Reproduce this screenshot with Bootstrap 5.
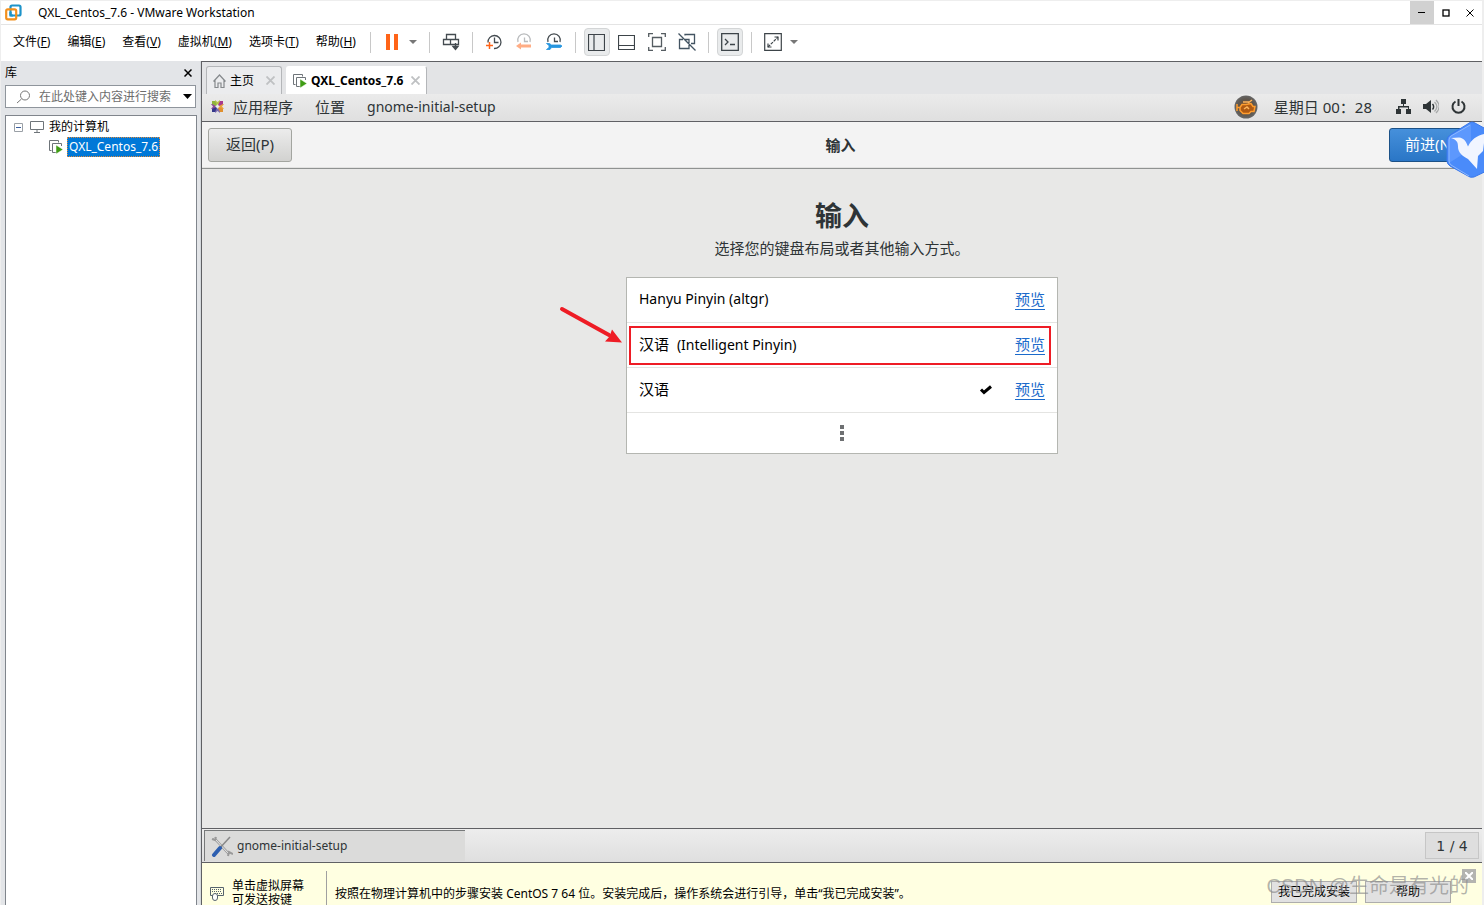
<!DOCTYPE html>
<html lang="zh-CN">
<head>
<meta charset="utf-8">
<meta name="viewport" content="width=device-width, initial-scale=1">
<title>QXL_Centos_7.6 - VMware Workstation</title>
<link href="https://cdn.jsdelivr.net/npm/bootstrap@5.3.0/dist/css/bootstrap.min.css" rel="stylesheet">
<style>
  body { font: 12px/16px "Noto Sans", "Noto Sans CJK SC", sans-serif; color: #000; background: #fff; }
  svg { display: block; flex: none; }
  button { border: 0; padding: 0; background: none; color: inherit; }
  .app { border: solid #eee; border-width: 1px 2px 0 1px; }
  .title-bar { height: 24px; border-bottom: 1px solid #e4e4e4; }
  .win-btn { width: 24px; height: 23px; display: grid; place-items: center; }
  .win-btn.hot { background: #d1d1d1; }
  .menu-bar { height: 36px; padding-left: 4px; }
  .menu-bar .nav { gap: 1px; }
  .menu-bar .nav-link { padding: 7px 8px 9px; line-height: 16px; color: #000; }
  .tools { gap: 4px; padding: 0 0 2px 2px; }
  .tool { width: 26px; height: 28px; display: grid; place-items: center; border: 1px solid transparent; border-radius: 4px; }
  .tool.on { background: #e9ebec; border-color: #d3d5d6; }
  .tool-caret { width: 16px; height: 28px; display: grid; place-items: center; }
  .sep { width: 1px; height: 21px; margin: 0 4px; background: #c8c8c8; }
  .library { width: 200px; background: #e3e5e8; padding: 0 4px; border-right: 1px solid #d4d8dc; }
  .library-head { height: 24px; }
  .search { height: 23px; border: 1px solid #8f959c; background: #fff; padding: 0 3px 0 10px; margin-bottom: 7px; }
  .search input { border: 0; outline: 0; padding: 0; font: inherit; width: 0; }
  .search input::placeholder { color: #6d6d6d; opacity: 1; }
  .tree { border: 1px solid #80858c; border-bottom: 0; background: #fff; padding: 1px 8px; width: 192px; }
  .tree li { height: 20px; }
  .tree-mark { margin-right: 7px; }
  .tree-vm { padding-left: 35px; }
  .tree .picked { background: #0078d7; color: #fff; outline: 1px dotted #e08a3c; outline-offset: -1px; padding: 2px; line-height: 16px; }
  .vm { border-left: 1px solid #5f6064; border-top: 1px solid #5f6064; }
  .tab-strip { background: #e3e4e6; height: 32px; padding: 4px 4px 0; gap: 4px; }
  .vm-tab { height: 28px; padding: 0 6px; border: 1px solid #b4b6b9; border-bottom: 0; border-radius: 3px 3px 0 0; background: #ebecee; }
  .vm-tab.current { background: #fff; border-left-color: #fff; border-top-color: #fff; }
  .guest { background: #e8e8e7; color: #2e3436; font-size: 15px; line-height: 20px; }
  .g-text { font-size: 14px; }
  .top-panel { height: 28px; background: linear-gradient(#ebebeb, #dfdfdf); border-bottom: 1px solid #5f6064; padding: 0 16px 2px 8px; }
  .panel-menu { gap: 22px; }
  .head-bar { height: 47px; background: #f3f3f3; border-bottom: 1px solid #8f9291; box-shadow: inset 0 -1px #e2e2e1; padding: 0 6px; }
  .g-btn { height: 34px; min-width: 84px; border: 1px solid #a3a5a0; border-radius: 3px; background: linear-gradient(#ececec, #d2d2d0); padding: 0 15px 2px; }
  .g-btn.go { min-width: 87px; background: linear-gradient(#4690db, #2a76c6); border-color: #1c5187; color: #fff; text-align: left; }
  .bird { position: absolute; right: -16px; top: 121px; z-index: 3; }
  .page-body { padding-top: 33px; }
  .page-title { font-size: 27px; line-height: 28px; font-weight: 700; margin-bottom: 8px; }
  .layouts { width: 432px; margin-top: 19px; background: #fff; border: 1px solid #b4b6b1; color: #000; }
  .layouts li { height: 45px; padding: 0 12px 2px; border-bottom: 1px solid #e4e4e2; }
  .layouts li:last-child { height: 40px; padding-bottom: 0; border: 0; }
  .layouts a { color: #1b6acb; border-bottom: 1px solid #1b6acb; line-height: 20px; text-decoration: none; }
  .pick-box { position: absolute; left: 2px; right: 6px; top: 3px; bottom: 2px; border: 2px solid #ee1c25; }
  .pick-arrow { position: absolute; right: 100%; top: -20px; margin-right: 4px; }
  .task-bar { height: 35px; border: solid #5f6064; border-width: 1px 0; background: linear-gradient(#ededed, #dfdfdf); padding: 1px 3px 1px 2px; }
  .task { width: 261px; height: 31px; padding: 0 6px; background: #dbdbda; border: solid #77797a; border-width: 1px 0 0 1px; font-size: 12px; }
  .pager { width: 54px; height: 27px; border: 1px solid #c6c6c6; background: #dedede; font-family: "DejaVu Sans", sans-serif; font-size: 14px; }
  .hint { height: 42px; background: #ffffe1; line-height: 14px; padding-left: 8px; }
  .hint-rule { width: 1px; height: 34px; background: #a0a0a0; margin: 8px 8px 0 22px; }
  .hint-actions { gap: 8px; padding: 18px 31px 0 0; }
  .h-btn { height: 22px; width: 86px; background: #e1e1e1; border: 1px solid #adadad; }
  .watermark { position: absolute; right: 13px; bottom: 7px; font: 20px/24px "Liberation Sans", "Noto Sans CJK SC", sans-serif; color: #8c8c8ca8; white-space: nowrap; pointer-events: none; }
  .hint-close { position: absolute; right: 6px; top: 6px; width: 14px; height: 14px; background: #b4b4b0; display: grid; place-items: center; }
</style>
</head>
<body class="position-relative overflow-hidden">
<div class="app vh-100 d-flex flex-column overflow-hidden">
  <header class="title-bar d-flex align-items-center flex-shrink-0">
    <svg class="ms-1" width="17" height="17" viewBox="0 0 17 17" fill="none" stroke-width="2.2"><rect x="5.500" y="1.500" width="10" height="10" rx="1.500" stroke="#1d93c9"/><rect x="1.200" y="5.300" width="10" height="10" rx="1.500" stroke="#f2901d"/><path d="M5.500 8V11.500H8" stroke="#1d93c9"/></svg>
    <span class="ms-3 me-auto">QXL_Centos_7.6 - VMware Workstation</span>
    <button class="win-btn hot" aria-label="最小化"><svg width="8" height="8" stroke="#000"><path d="M0 3.500H7"/></svg></button>
    <button class="win-btn" aria-label="最大化"><svg width="8" height="8" fill="none" stroke="#000" stroke-width="1.300"><rect x="1" y="1" width="6" height="6"/></svg></button>
    <button class="win-btn" aria-label="关闭"><svg width="8" height="8" stroke="#000"><path d="M.5.5l7 7m0-7l-7 7"/></svg></button>
  </header>

  <nav class="menu-bar d-flex align-items-center flex-shrink-0">
    <div class="nav flex-nowrap text-nowrap">
      <a class="nav-link" href="#">文件(<u>F</u>)</a><a class="nav-link" href="#">编辑(<u>E</u>)</a><a class="nav-link" href="#">查看(<u>V</u>)</a><a class="nav-link" href="#">虚拟机(<u>M</u>)</a><a class="nav-link" href="#">选项卡(<u>T</u>)</a><a class="nav-link" href="#">帮助(<u>H</u>)</a>
    </div>
    <div class="tools d-flex align-items-center">
      <span class="sep"></span>
      <div class="d-flex">
        <button class="tool" aria-label="挂起"><svg width="12" height="16" fill="#ff6418"><path d="M0 0h4v16H0zM8 0h4v16H8z"/></svg></button>
        <button class="tool-caret" aria-label="电源选项"><svg width="8" height="4" fill="#777"><path d="M0 0h8L4 4z"/></svg></button>
      </div>
      <span class="sep"></span>
      <button class="tool" aria-label="发送 Ctrl+Alt+Del"><svg width="18" height="18" fill="none" stroke="#444b50" stroke-width="1.300"><path d="M4.500 6.500V1.500h9v5M1.500 6.500h15v5h-15zM8.500 6.500v5M13.500 10v6M11 13.500l2.500 3 2.500-3z"/></svg></button>
      <span class="sep"></span>
      <button class="tool" aria-label="拍摄快照"><svg width="18" height="18" fill="none" stroke="#444b50" stroke-width="1.300"><path d="M3 9.500A6.500 6.500 0 1 1 9 15.500M9.500 4.500v5h4"/><path d="M1 12.500h7M4.500 9v7" stroke="#ff6418" stroke-width="1.500"/></svg></button>
      <button class="tool" aria-label="恢复快照"><svg width="18" height="18" fill="none" stroke="#b9bbbd" stroke-width="1.300"><path d="M3 9A6.300 6.300 0 1 1 15 9M9.500 4.500v4h3.500"/><path d="M1 13l5-3.500v7z" stroke="none" fill="#ffad85"/><path d="M4 13h12" stroke="#ffad85" stroke-width="3"/></svg></button>
      <button class="tool" aria-label="管理快照"><svg width="18" height="18" fill="none" stroke="#444b50" stroke-width="1.300"><path d="M3 9A6.300 6.300 0 1 1 15 9M9.500 4.500v4h3.500"/><path d="M1.500 10.500h3l2 1.500h9l1.500 1-1.500 1.500h-9L5 16.500H1.500L4 14.500v-2z" fill="#2696df" stroke="#2696df" stroke-width=".8"/></svg></button>
      <span class="sep"></span>
      <button class="tool on" aria-label="显示或隐藏库"><svg width="17" height="17" fill="none" stroke="#3d4449"><path d="M.5.500h16v16H.500zM6 .5v16" stroke-width="1.200"/></svg></button>
      <button class="tool" aria-label="缩略图栏"><svg width="17" height="17" fill="none" stroke="#3d4449" stroke-width="1.200"><path d="M.5 1.500h16v14H.500zM.5 11.500h16"/></svg></button>
      <button class="tool" aria-label="全屏"><svg width="18" height="18" fill="none" stroke="#555c61" stroke-width="1.300"><path d="M.700 4V.700H5M13 .700h4.300V4M17.300 14v3.300H13M5 17.300H.700V14M4.500 4.500h9v9h-9z"/></svg></button>
      <button class="tool" aria-label="Unity 模式"><svg width="18" height="18" fill="none" stroke="#435462" stroke-width="1.300"><path d="M7 2.500V1.500h9.500v9H13M5 6.500H1.500v9H11V12M7 6.500h4V10M.5.5l17 17"/></svg></button>
      <span class="sep"></span>
      <button class="tool on" aria-label="控制台视图"><svg width="18" height="18" fill="none" stroke="#3d4449" stroke-width="1.300"><path d="M.700.700h16.600v16.600H.700zM4 6l3 3-3 3M9 11.500h5"/></svg></button>
      <span class="sep"></span>
      <div class="d-flex">
        <button class="tool" aria-label="自由拉伸"><svg width="18" height="18" fill="none" stroke="#3d4449" stroke-width="1.200"><path d="M.700.700h16.600v16.600H.700zM10.500 4H14v3.500M4 10.500V14h3.500"/><path d="M4 14L14 4" stroke-dasharray="3 1"/></svg></button>
        <button class="tool-caret" aria-label="拉伸选项"><svg width="8" height="4" fill="#777"><path d="M0 0h8L4 4z"/></svg></button>
      </div>
    </div>
  </nav>

  <div class="d-flex flex-grow-1 overflow-hidden">
    <aside class="library d-flex flex-column flex-shrink-0">
      <div class="library-head d-flex align-items-center justify-content-between pe-1"><span>库</span><button aria-label="关闭库"><svg width="8" height="8" stroke="#000" stroke-width="1.500"><path d="M.5.5l7 7m0-7l-7 7"/></svg></button></div>
      <div class="search d-flex align-items-center flex-shrink-0">
        <svg width="15" height="14" fill="none" stroke="#777"><circle cx="9" cy="5.500" r="4.500"/><path d="M5.500 9L1 13"/></svg>
        <input class="flex-grow-1 ms-2" type="text" aria-label="搜索" placeholder="在此处键入内容进行搜索">
        <svg width="9" height="5"><path d="M0 0h9L4.500 5z"/></svg>
      </div>
      <ul class="tree list-unstyled flex-grow-1 mb-0">
        <li class="d-flex align-items-center"><svg class="tree-mark" width="9" height="9" fill="none" stroke="#9aa0a6"><path d="M.5.500h8v8h-8z"/><path d="M2 4.500h5" stroke="#3a5fa0"/></svg><svg class="me-1" width="15" height="12" fill="none" stroke="#6e7479"><path d="M.5.500h13v8H.500zM7 8.500v3M4 11.500h6"/></svg><span class="text-nowrap">我的计算机</span></li>
        <li class="tree-vm d-flex align-items-center"><svg class="me-1" width="14" height="14" fill="none" stroke="#6e7479"><path d="M2.500 10.500h-2V.500h9v2M12.500 6V3.500H3.500v9H7"/><path d="M7 5l7 4.500L7 14z" fill="#3f9c14" stroke="#fff" stroke-width=".5"/></svg><span class="picked">QXL_Centos_7.6</span></li>
      </ul>
    </aside>

    <main class="vm d-flex flex-column flex-grow-1 overflow-hidden position-relative">
      <div class="tab-strip d-flex flex-shrink-0">
        <div class="vm-tab d-flex align-items-center"><svg width="13" height="14" fill="none" stroke="#85898c" stroke-width="1.200"><path d="M.5 7.500L6.500 1l6 6.500M2 6v7.500h3V9h3v4.500h3V6"/></svg><span class="ms-1">主页</span><button class="ms-2 ps-1" aria-label="关闭主页"><svg width="9" height="9" stroke="#bfc1c3" stroke-width="1.800"><path d="M.5.5l8 8m0-8l-8 8"/></svg></button></div>
        <div class="vm-tab current d-flex align-items-center"><svg width="14" height="14" fill="none" stroke="#6e7479"><path d="M2.500 10.500h-2V.500h9v2M12.500 6V3.500H3.500v9H7"/><path d="M7 5l7 4.500L7 14z" fill="#3f9c14" stroke="#fff" stroke-width=".5"/></svg><b class="ms-1">QXL_Centos_7.6</b><button class="ms-2" aria-label="关闭 QXL_Centos_7.6"><svg width="9" height="9" stroke="#bfc1c3" stroke-width="1.800"><path d="M.5.5l8 8m0-8l-8 8"/></svg></button></div>
      </div>

      <section class="guest d-flex flex-column flex-grow-1 overflow-hidden">
        <div class="top-panel d-flex align-items-center flex-shrink-0">
          <svg width="15" height="15" viewBox="0 0 15 15"><path d="M5 1l2.500 2L10 1v4.500H5z" fill="#b9c34b"/><path d="M14 5l-2 2.500 2 2.500H9.500V5z" fill="#e9a23b"/><path d="M5 14l2.500-2 2.500 2V9.500H5z" fill="#7d6bb0"/><path d="M1 5l2 2.500L1 10h4.500V5z" fill="#8b4a9c"/><path d="M2 2h3l2 4-1 1-4-2z" fill="#8fb53c"/><path d="M13 2h-3L8 6l1 1 4-2z" fill="#a8398c"/><path d="M13 13h-3L8 9l1-1 4 2z" fill="#e0902d"/><path d="M2 13h3l2-4-1-1-4 2z" fill="#34388a"/><circle cx="7.500" cy="7.500" r="1.300" fill="#eee"/></svg>
          <div class="panel-menu d-flex align-items-center ms-2"><span>应用程序</span><span>位置</span><span class="g-text">gnome-initial-setup</span></div>
          <svg class="ms-auto" width="24" height="24" viewBox="0 0 24 24"><defs><radialGradient id="orb"><stop offset="0" stop-color="#8d4a14"/><stop offset=".7" stop-color="#5e574f"/><stop offset="1" stop-color="#666"/></radialGradient></defs><circle cx="12" cy="12" r="11.500" fill="url(#orb)"/><path d="M3 9v7M3 12.500h3l2-3h4l5-1 2 3h2l-1 5h-3l-2 2H9l-3-3v-3" fill="#b05a12" stroke="#ff9d2e" stroke-width="1.500"/><path d="M9 7h6M14 8l4-3M10 14l3-2 2 2" fill="none" stroke="#ffb45a" stroke-width="1.500"/></svg>
          <span class="ms-3 text-nowrap">星期日 00：28</span>
          <svg class="ms-4 me-2" width="15" height="15" fill="#2e3436"><path d="M5 0h5v5H8v2h5v3h2v5h-5v-5h2V8.500H3.500V10H5v5H0v-5h2V7h5V5H5z"/></svg>
          <svg class="mx-1" width="16" height="15" fill="none"><path d="M0 5h3l5-4v13l-5-4H0z" fill="#2e3436"/><path d="M9.500 5c1.500 1.500 1.500 4 0 5.500" stroke="#2e3436" stroke-width="1.500"/><path d="M11.500 3c3 3 3 6.500 0 9.500M13 1c4 4 4 9 0 13" stroke="#a7a9a9" stroke-width="1.300"/></svg>
          <svg class="ms-2" width="15" height="15" fill="none" stroke="#2e3436" stroke-width="2"><path d="M4.500 2.500a6 6 0 1 0 6 0M7.500 0v7"/></svg>
        </div>

        <div class="head-bar d-flex align-items-center justify-content-between flex-shrink-0">
          <button class="g-btn">返回(P)</button>
          <b>输入</b>
          <button class="g-btn go">前进(N)</button>
        </div>

        <div class="page-body d-flex flex-column align-items-center flex-grow-1">
          <h1 class="page-title">输入</h1>
          <div>选择您的键盘布局或者其他输入方式。</div>
          <ul class="layouts list-unstyled">
            <li class="d-flex align-items-center"><span class="g-text me-auto">Hanyu Pinyin (altgr)</span><a href="#">预览</a></li>
            <li class="d-flex align-items-center position-relative">
              <span class="me-auto">汉语 <span class="g-text ms-1">(Intelligent Pinyin)</span></span><a href="#">预览</a>
              <span class="pick-box"></span>
              <svg class="pick-arrow" width="64" height="44" viewBox="0 0 64 44" fill="#ee1c25"><path d="M3 6L50 32" stroke="#ee1c25" stroke-width="4" stroke-linecap="round"/><path d="M53 26.500L63 39.500 46 38.500 50.500 33.500z"/></svg>
            </li>
            <li class="d-flex align-items-center"><span class="me-auto">汉语</span><svg class="me-4" width="9" height="10" viewBox="2 0 9 10" overflow="visible" fill="none" stroke="#000" stroke-width="3"><path d="M1 5.500l3 3 7-6"/></svg><a href="#">预览</a></li>
            <li class="d-flex align-items-center justify-content-center"><svg width="4" height="16" fill="#6e7072"><path d="M0 0h4v4H0zM0 6h4v4H0zM0 12h4v4H0z"/></svg></li>
          </ul>
        </div>

        <div class="task-bar d-flex align-items-center justify-content-between flex-shrink-0">
          <button class="task d-flex align-items-center"><svg width="22" height="22" fill="none"><path d="M3 3l15 16" stroke="#999" stroke-width="2.500"/><path d="M3 3l15 16" stroke="#eee"/><path d="M1 4l3 1 1-3M17 21l1-4 4 2" stroke="#999" stroke-width="2"/><path d="M19 2L8 14" stroke="#888" stroke-width="1.500"/><path d="M9 13l-6 7" stroke="#2d5fb0" stroke-width="4" stroke-linecap="round"/></svg><span class="ms-1">gnome-initial-setup</span></button>
          <span class="pager d-flex align-items-center justify-content-center">1&nbsp;/&nbsp;4</span>
        </div>
      </section>

      <footer class="hint d-flex flex-shrink-0 position-relative overflow-hidden">
        <svg class="mt-4" width="14" height="15" fill="none" stroke="#56636d"><path d="M.5.500h13v8H.500z"/><path d="M2 2.500h10M2 4.500h10M5 6.500h7" stroke-dasharray="1 1"/><rect x="2.500" y="6.500" width="5" height="7" rx="2.500" fill="#fff"/></svg>
        <div class="text-nowrap ms-2 mt-3">单击虚拟屏幕<br>可发送按键</div>
        <span class="hint-rule"></span>
        <span class="text-nowrap pt-4 me-auto">按照在物理计算机中的步骤安装 CentOS 7 64 位。安装完成后，操作系统会进行引导，单击“我已完成安装”。</span>
        <div class="hint-actions d-flex"><button class="h-btn">我已完成安装</button><button class="h-btn">帮助</button></div>
        <button class="hint-close" aria-label="关闭提示"><svg width="8" height="8" stroke="#fff" stroke-width="2"><path d="M0 0l8 8m0-8L0 8"/></svg></button>
        <span class="watermark">CSDN @生命是有光的</span>
      </footer>
    </main>
  </div>
</div>
<svg class="bird" width="54" height="58" viewBox="0 0 54 58"><path d="M24 1.500q2-1 4 0l22 12q3 2 3 5v22q0 3-3 5L28 56q-4 1-6-1L4 45q-3-2-3-5V19q0-3 3-5z" fill="#4a8bfa" stroke="#3a78ea"/><path d="M25 3v25L3 42V19q0-2 2-4z" fill="#6fa5ff" opacity=".5"/><path d="M24 4L5 15q-2 2-2 4v21q0 2 2 4l18 11" fill="none" stroke="#8db8ff"/><path d="M5 17l8-.500c5 .5 7 4 9 9C26 17 32 14 42 12l-4 10-1 8-5 5-1 13-9-10c-6-3-10-7-10-12 0-5-1-7-7-9z" fill="#f1f5ff"/></svg>
<script src="https://cdn.jsdelivr.net/npm/bootstrap@5.3.0/dist/js/bootstrap.bundle.min.js"></script>
</body>
</html>
